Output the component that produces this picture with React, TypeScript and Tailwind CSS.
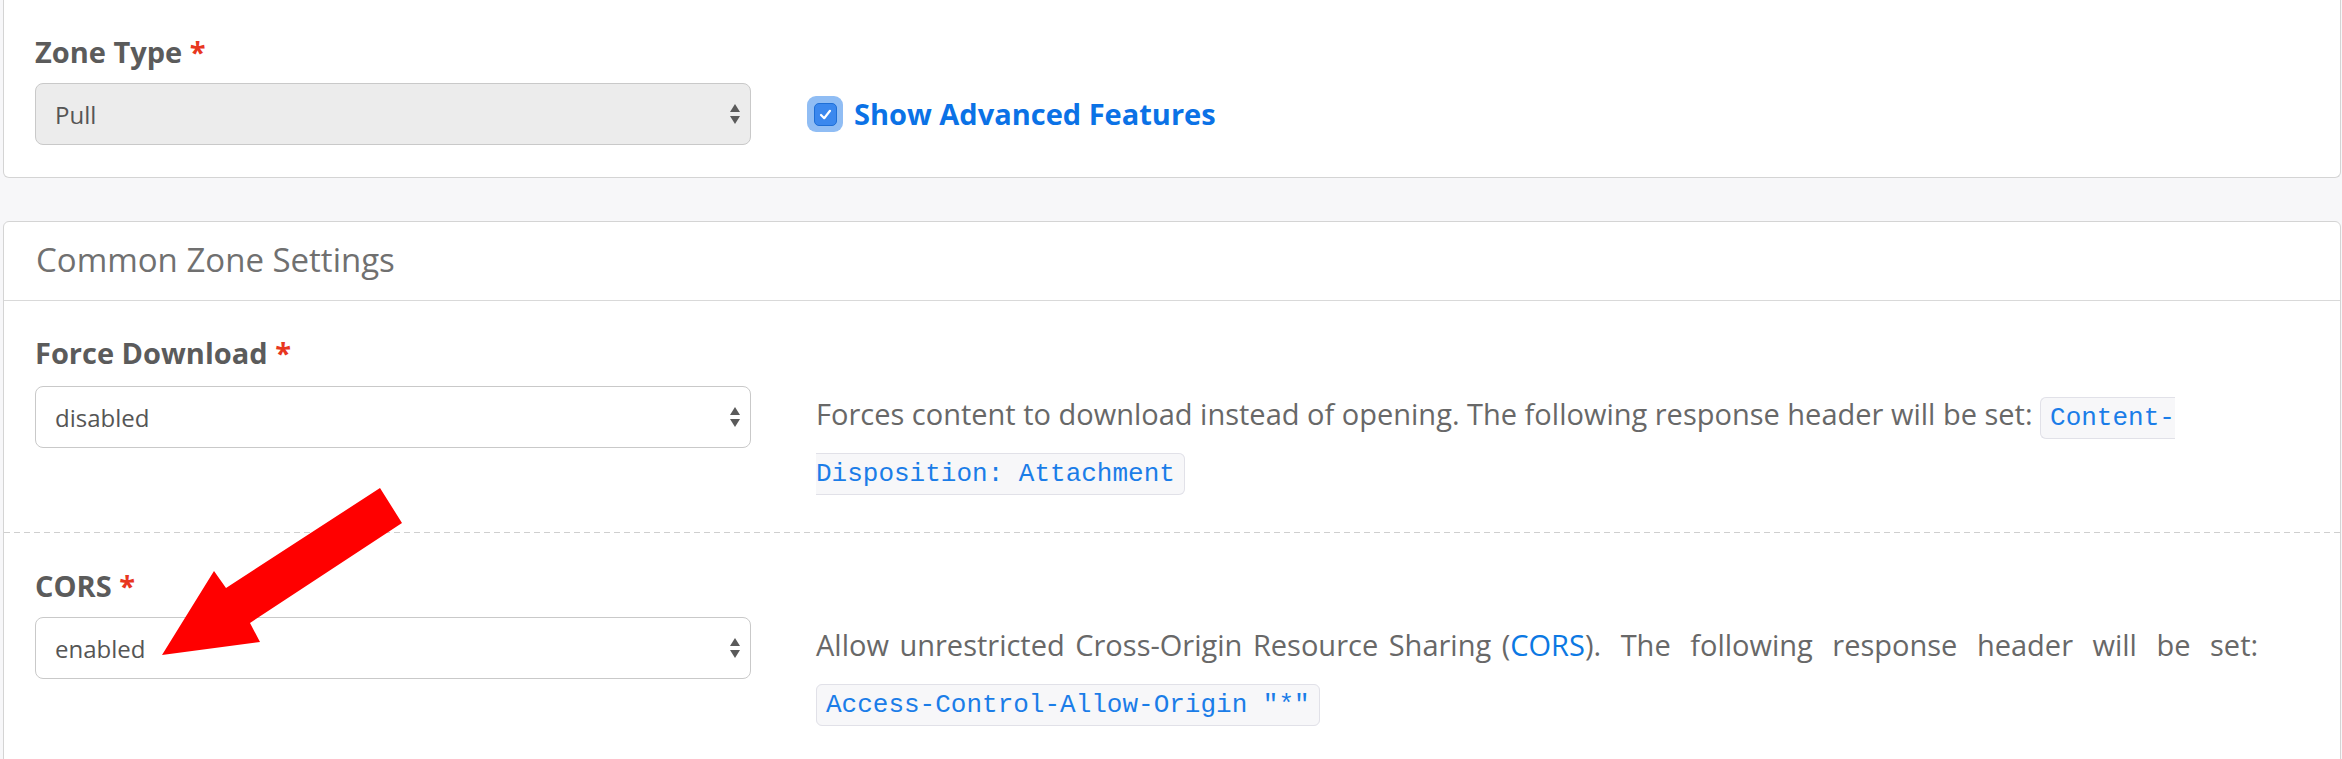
import React from "react";

function SelectArrows() {
  return (
    <svg width="12" height="22" viewBox="0 0 12 22" className="shrink-0">
      <polygon points="1,9 6,1 11,9" fill="#5a5a5a" />
      <polygon points="1,13 11,13 6,21" fill="#5a5a5a" />
    </svg>
  );
}

function FakeSelect({ value, gray }: { value: string; gray?: boolean }) {
  return (
    <div
      className={`flex h-[62px] w-[716px] shrink-0 items-center justify-between rounded-[8px] border border-[#c9c9c9] pl-[19px] pr-[9px] ${
        gray ? "bg-[#ececec]" : "bg-white"
      }`}
    >
      <span className="pt-[1px] text-[24px] leading-[32px] text-[#555555]">{value}</span>
      <SelectArrows />
    </div>
  );
}

function Label({ text, mb }: { text: string; mb: string }) {
  return (
    <div className={`text-[29px] font-bold leading-[40px] text-[#5b5b5b] ${mb}`}>
      {text} <span className="text-[#e8371f]">*</span>
    </div>
  );
}

function Code({ children }: { children: React.ReactNode }) {
  return (
    <code className="rounded-[6px] border border-[#e1e1e8] bg-[#f7f7f9] px-[9px] py-[5px] font-['Liberation_Mono',monospace] text-[26px] leading-[30px] text-[#1b7de8]">
      {children}
    </code>
  );
}

export default function App() {
  return (
    <div className="relative min-h-[759px] overflow-hidden bg-[#f7f7f9] pl-[3px] pr-[1px] font-['Open_Sans',sans-serif]">
      {/* Top card */}
      <div className="rounded-b-[6px] border-x border-b border-[#d4d4d4] bg-white px-[31px] pt-[32px] pb-[32px]">
        <Label text="Zone Type" mb="mb-[11px]" />
        <div className="flex items-center">
          <FakeSelect value="Pull" gray />
          <div className="ml-[56px] flex items-center">
            <div className="flex h-[36px] w-[36px] items-center justify-center rounded-[9px] bg-[#90bdf4]">
              <div className="flex h-[23px] w-[23px] items-center justify-center rounded-[5px] border border-[#1f6fd6] bg-[#3b88ee]">
                <svg width="15" height="15" viewBox="0 0 15 15">
                  <path d="M3 8 L6.2 11.2 L12 3.8" fill="none" stroke="white" strokeWidth="2.2" strokeLinecap="round" strokeLinejoin="round" />
                </svg>
              </div>
            </div>
            <span className="ml-[11px] text-[29px] font-bold leading-[40px] text-[#0b72e6]">Show Advanced Features</span>
          </div>
        </div>
      </div>

      {/* Common Zone Settings card */}
      <div className="mt-[43px] rounded-[6px] border border-[#d4d4d4] bg-white">
        <div className="border-b border-[#d9d9d9] px-[32px] pt-[13px] pb-[15px]">
          <div className="text-[33px] leading-[50px] text-[#707070]">Common Zone Settings</div>
        </div>

        <div className="px-[31px] pt-[32px] pb-[34px]">
          <Label text="Force Download" mb="mb-[13px]" />
          <div className="flex items-start">
            <FakeSelect value="disabled" />
            <div className="ml-[65px] whitespace-nowrap text-[29px] leading-[56px] text-[#686868]">
              Forces content to download instead of opening. The following response header will be set:{" "}
              <Code>
                Content-
                <br />
                Disposition: Attachment
              </Code>
            </div>
          </div>
        </div>

        <div className="h-px bg-[repeating-linear-gradient(to_right,#cfcfcf_0px,#cfcfcf_6px,transparent_6px,transparent_10px)]" />

        <div className="px-[31px] pt-[33px] pb-[40px]">
          <Label text="CORS" mb="mb-[11px]" />
          <div className="flex items-start">
            <FakeSelect value="enabled" />
            <div className="ml-[65px] whitespace-nowrap text-[29px] leading-[56px] text-[#686868]">
              <span className="[word-spacing:3px]">Allow unrestricted Cross-Origin Resource Sharing (</span>
              <span className="text-[#0b78e3]">CORS</span>
              <span className="[word-spacing:12px]">). The following response header will be set:</span>
              <br />
              <Code>Access-Control-Allow-Origin "*"</Code>
            </div>
          </div>
        </div>
      </div>

      {/* Red annotation arrow */}
      <svg className="pointer-events-none absolute left-0 top-0" width="2342" height="759" viewBox="0 0 2342 759">
        <polygon points="162,655 214,571 226,588 380,488 402,523 250,623 260,642" fill="#ff0000" />
      </svg>
    </div>
  );
}
